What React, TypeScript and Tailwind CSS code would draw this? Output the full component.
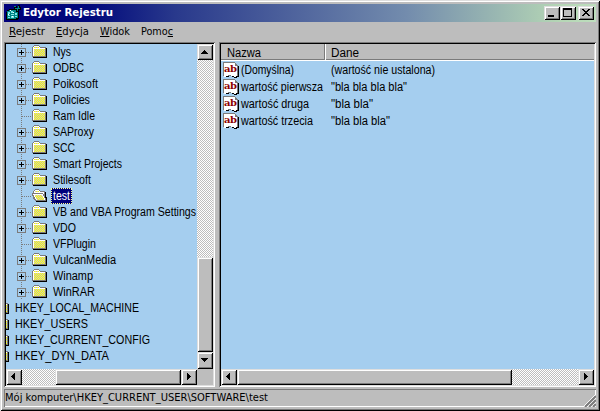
import React, { useLayoutEffect, useRef, useState } from "react";

const RAISED =
  "bg-[#bdbdbd] shadow-[inset_1px_1px_#dedede,inset_-1px_-1px_#000,inset_2px_2px_#fff,inset_-2px_-2px_#7b7b7b]";
const TRACK =
  "bg-[repeating-conic-gradient(#bdbdbd_0_25%,#fff_0_50%)] bg-[length:2px_2px]";

type Dir = "up" | "down" | "left" | "right";
const ARROWS: Record<Dir, string> = {
  up: "M7 6h1v1h1v1h1v1h1v1H4V9h1V8h1V7h1z",
  down: "M4 6h7v1h-1v1H9v1H8v1H7V9H6V8H5V7H4z",
  left: "M9 4v7H8v-1H7V9H6V8H5V7h1V6h1V5h1V4z",
  right: "M6 4h1v1h1v1h1v1h1v1H9v1H8v1H7v1H6z",
};

// Condenses or widens its text so that it spans exactly `w` pixels.
function Fit({ w, children }: { w: number; children: React.ReactNode }) {
  const ref = useRef<HTMLSpanElement>(null);
  const [scale, setScale] = useState(1);
  useLayoutEffect(() => {
    if (ref.current) setScale(w / ref.current.getBoundingClientRect().width);
  }, [w]);
  return (
    <span className="inline-flex shrink-0" style={{ width: w }}>
      <span ref={ref} className="inline-block shrink-0 origin-left" style={{ transform: `scaleX(${scale})` }}>
        {children}
      </span>
    </span>
  );
}

function ArrowButton({ dir, className = "h-4" }: { dir: Dir; className?: string }) {
  return (
    <div className={`w-4 shrink-0 ${RAISED} ${className}`}>
      <svg width="16" height="16" viewBox="0 0 16 16" shapeRendering="crispEdges">
        <path d={ARROWS[dir]} />
      </svg>
    </div>
  );
}

type Band = [x: number, y: number, w: number, h: number];
const CLOSED_BANDS: Band[] = [[2, 3, 5, 1], [2, 5, 11, 7]];
const OPEN_BANDS: Band[] = [[3, 3, 4, 1], [3, 7, 7, 1], [3, 8, 8, 1], [4, 9, 7, 1], [4, 10, 8, 1], [5, 11, 7, 1]];

// Every second pixel of each band, as in a 16-colour dithered fill.
function Dither({ bands }: { bands: Band[] }) {
  const cells: React.ReactNode[] = [];
  for (const [x0, y0, w, h] of bands)
    for (let y = y0; y < y0 + h; y++)
      for (let x = x0; x < x0 + w; x++)
        cells.push(
          <rect key={`${x}-${y}`} x={x} y={y} width="1" height="1" fill={(x + y) % 2 === 1 ? "#ffff00" : "#c6c6c6"} />,
        );
  return <g>{cells}</g>;
}

function Folder({ open = false }: { open?: boolean }) {
  return (
    <svg className="shrink-0" width="16" height="16" viewBox="0 0 16 16" shapeRendering="crispEdges">
      {open ? (
        <>
          <path fill="#7b7b7b" d="M3 1h4v1h1v1h5v8H1V3h1V2h1z" />
          <path fill="#fff" d="M3 2h4v1h1v1h4v2H2V3h1z" />
          <path fill="#000" d="M13 4h1v5h1v5H4v-1h10v-1h-1z" />
          <path fill="#7b7b7b" d="M0 5h11v1h1v2h1v2h1v3H3v-1H2v-2H1V8H0z" />
          <path fill="#fff" d="M1 6h10v2h1v2h1v2H4v-1H3V9H2V7H1z" />
          <Dither bands={OPEN_BANDS} />
        </>
      ) : (
        <>
          <path fill="#000" d="M14 4h1v10H1v-1h13z" />
          <path fill="#7b7b7b" d="M2 1h5v1h1v1h6v10H0V3h1V2h1z" />
          <path fill="#fff" d="M2 2h5v1h1v1h5v1H2v7H1V3h1z" />
          <Dither bands={CLOSED_BANDS} />
        </>
      )}
    </svg>
  );
}

function Branch({ plus }: { plus: boolean }) {
  return (
    <svg className="shrink-0" width="15" height="16" viewBox="0 0 15 16" shapeRendering="crispEdges">
      <path stroke="#7b7b7b" strokeDasharray="1 1" d="M4.5 0v16M5 8.500h10" fill="none" />
      {plus && (
        <>
          <path fill="#7b7b7b" d="M0 4h9v9H0z" />
          <path fill="#a5ceef" d="M1 5h7v7H1z" />
          <path d="M2 8h5v1H2zM4 6h1v5H4z" />
        </>
      )}
    </svg>
  );
}

const KEYS: [string, boolean, number][] = [
  ["Nys", true, 18],
  ["ODBC", true, 31],
  ["Poikosoft", true, 45],
  ["Policies", true, 37],
  ["Ram Idle", false, 42],
  ["SAProxy", true, 41],
  ["SCC", true, 22],
  ["Smart Projects", true, 69],
  ["Stilesoft", true, 38],
  ["test", false, 17],
  ["VB and VBA Program Settings", true, 143],
  ["VDO", true, 23],
  ["VFPlugin", false, 43],
  ["VulcanMedia", true, 63],
  ["Winamp", true, 40],
  ["WinRAR", true, 42],
];
const HIVES: [string, number][] = [
  ["HKEY_LOCAL_MACHINE", 124],
  ["HKEY_USERS", 73],
  ["HKEY_CURRENT_CONFIG", 135],
  ["HKEY_DYN_DATA", 94],
];
const VALUES: [string, number, string, number][] = [
  ["(Domyślna)", 53, "(wartość nie ustalona)", 104],
  ["wartość pierwsza", 82, "\"bla bla bla bla\"", 76],
  ["wartość druga", 68, "\"bla bla\"", 42],
  ["wartość trzecia", 72, "\"bla bla bla\"", 59],
];

function StringIcon() {
  return (
    <span className="relative h-4 w-4 shrink-0">
      <svg className="block" width="16" height="16" viewBox="0 0 16 16" shapeRendering="crispEdges">
        <path fill="#000" d="M14 4h2v11h-2v1h-3v-1H9v-1H6v1H2v-1h12z" />
        <path fill="#7b7b7b" d="M0 0h12v1h1v1h1v1h1v11H0z" />
        <path fill="#fff" d="M1 1h11v3h2v10h-1v1h-2v-1H8v-1H5v1H3v1H1z" />
      </svg>
      <span className="absolute left-[1px] top-[1px] font-['DejaVu_Serif',serif] text-[10px] font-bold leading-[11px] tracking-[-0.500px] text-[#8c0000]">ab</span>
    </span>
  );
}

function TitleButton({ d, className = "" }: { d: string; className?: string }) {
  return (
    <div className={`h-[14px] w-4 ${RAISED} ${className}`}>
      <svg width="16" height="14" viewBox="0 0 16 14" shapeRendering="crispEdges">
        <path d={d} />
      </svg>
    </div>
  );
}

export default function App() {
  return (
    <div className="flex h-[411px] w-[600px] flex-col overflow-hidden whitespace-pre bg-[#bdbdbd] p-1 font-['Liberation_Sans',Arial,sans-serif] text-[12px] text-black shadow-[inset_1px_1px_#dedede,inset_-1px_-1px_#000,inset_2px_2px_#fff,inset_-2px_-2px_#7b7b7b]">
      <div className="flex h-[18px] shrink-0 items-center bg-[linear-gradient(90deg,#00007b_0%,#00087b_14%,#29398c_29%,#738cad_68%,#b5d6b5_94%,#bddebd_100%)] pl-[2px] pr-[2px]">
        <svg width="16" height="16" viewBox="0 0 16 16" shapeRendering="crispEdges">
          <path fill="#000" d="M0 7h1V5h2V4h7v2h3v8h-1v1H0z" />
          <path fill="#008484" d="M1 6h2V5h7v2h2v6h-2v1H1z" />
          <path fill="#7be7e7" d="M2 7h2v2H2zM5 6h2v2H5zM5 9h3v1H5zM2 10h2v1H2zM5 11h3v2H5zM9 8h2v2H9zM9 11h2v1H9zM2 12h2v1H2z" />
          <path fill="#fff" d="M4 5h1v1H4zM7 7h1v1H7zM2 9h1v1H2zM6 11h1v1H6z" />
          <path fill="#000" d="M8 1h3v2h1V0h2v2h1v3h-2v2h-3V4H8z" />
          <path fill="#008484" d="M8 1h2v1H8zM12 1h1v2h1v1h-2v2h-1V3h1zM9 3h2v1H9z" />
        </svg>
        <span className="ml-[1px] flex font-['DejaVu_Sans_Condensed','DejaVu_Sans',sans-serif] text-[11px] font-bold text-white"><Fit w={90}>Edytor Rejestru</Fit></span>
        <TitleButton className="ml-auto" d="M4 9h6v2H4z" />
        <TitleButton d="M3 2h9v9H3zM4 4v6h7V4z" />
        <TitleButton className="ml-[2px]" d="M4 3h2v1h1v1h2V4h1V3h2v1h-1v1h-1v1H9v1h1v1h1v1h1v1h-2V9H9V8H7v1H6v1H4V9h1V8h1V7h1V6H6V5H5V4H4z" />
      </div>

      <div className="flex h-5 shrink-0 items-center pl-[5px] pt-px font-['DejaVu_Sans_Condensed','DejaVu_Sans',sans-serif] text-[11px]">
        <span className="w-[47px]"><Fit w={36}><u>R</u>ejestr</Fit></span>
        <span className="w-[44px]"><Fit w={33}><u>E</u>dycja</Fit></span>
        <span className="w-[41px]"><Fit w={30}><u>W</u>idok</Fit></span>
        <Fit w={32}>Pomo<u>c</u></Fit>
      </div>

      <div className="flex h-[345px] shrink-0 gap-1">
        <div className="flex w-[211px] shrink-0 flex-col p-[2px] shadow-[inset_1px_1px_#7b7b7b,inset_-1px_-1px_#fff,inset_2px_2px_#000,inset_-2px_-2px_#dedede]">
          <div className="flex h-[325px]">
            <div className="w-[191px] shrink-0 overflow-hidden bg-[#a5ceef]">
              {KEYS.map(([name, plus, w]) => (
                <div key={name} className="flex h-4 items-center pl-[11px]">
                  <Branch plus={plus} />
                  <Folder open={name === "test"} />
                  <span className={name === "test" ? "ml-[3px] flex h-4 border border-dotted border-[#ffff84] bg-[#00007b] px-[1px] leading-[14px] text-white" : "ml-[5px] flex leading-4"}><Fit w={w}>{name}</Fit></span>
                </div>
              ))}
              {HIVES.map(([name, w]) => (
                <div key={name} className="flex h-4 items-center">
                  <span className="-ml-[12px] flex"><Folder /></span>
                  <span className="ml-[5px] flex leading-4"><Fit w={w}>{name}</Fit></span>
                </div>
              ))}
            </div>
            <div className={`flex w-4 flex-col ${TRACK}`}>
              <ArrowButton dir="up" />
              <div className={`mt-[197px] h-[95px] ${RAISED}`} />
              <ArrowButton dir="down" className="h-[17px]" />
            </div>
          </div>
          <div className="flex h-4">
            <div className={`flex w-[191px] ${TRACK}`}>
              <ArrowButton dir="left" />
              <div className={`ml-[33px] w-[126px] ${RAISED}`} />
              <ArrowButton dir="right" />
            </div>
          </div>
        </div>

        <div className="flex min-w-0 flex-1 flex-col p-[2px] shadow-[inset_1px_1px_#7b7b7b,inset_-1px_-1px_#fff,inset_2px_2px_#000,inset_-2px_-2px_#dedede]">
          <div className="flex h-[17px] shrink-0 border-b border-white leading-[18px] shadow-[inset_0_-1px_#7b7b7b]">
            <span className="flex w-[104px] border-r border-[#7b7b7b] pl-[6px]"><Fit w={34}>Nazwa</Fit></span>
            <span className="flex flex-1 border-l border-white pl-[5px]"><Fit w={28}>Dane</Fit></span>
          </div>
          <div className="h-[308px] bg-[#a5ceef]">
            {VALUES.map(([name, nameW, data, dataW]) => (
              <div key={name} className="flex h-[17px] items-center pl-[2px]">
                <StringIcon />
                <span className="ml-[2px] flex w-[90px]"><Fit w={nameW}>{name}</Fit></span>
                <Fit w={dataW}>{data}</Fit>
              </div>
            ))}
          </div>
          <div className={`flex h-4 ${TRACK}`}>
            <ArrowButton dir="left" />
            <div className={`w-[275px] ${RAISED}`} />
            <ArrowButton dir="right" className="ml-auto h-4" />
          </div>
        </div>
      </div>

      <div className="mt-[2px] flex h-[18px] shrink-0 items-center justify-between pl-[1px] shadow-[inset_1px_1px_#7b7b7b,inset_-1px_-1px_#fff]">
        <span className="flex pt-px font-['DejaVu_Sans_Condensed','DejaVu_Sans',sans-serif] text-[11px]"><Fit w={263}>Mój komputer\HKEY_CURRENT_USER\SOFTWARE\test</Fit></span>
        <svg className="self-end" width="13" height="13" viewBox="0 0 13 13">
          <path stroke="#fff" d="M0 13L13 0M4 13L13 4M8 13L13 8" />
          <path stroke="#7b7b7b" strokeWidth="2" d="M2 13L13 2M6 13L13 6M10 13L13 10" />
        </svg>
      </div>
    </div>
  );
}
